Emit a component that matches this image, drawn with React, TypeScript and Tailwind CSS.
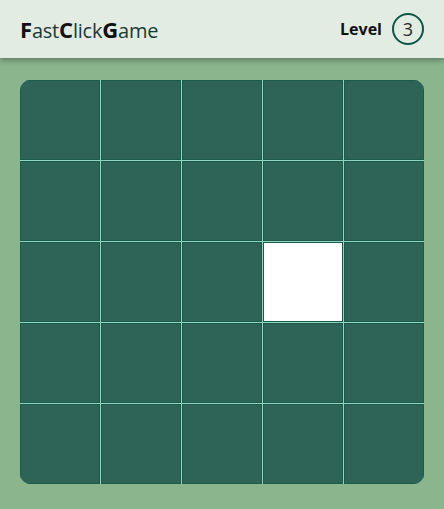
const ACTIVE = 13;

export default function App() {
  const cells = Array.from({ length: 25 }, (_, i) => i);

  return (
    <div
      className="min-h-[509px] bg-[#8ab58d]"
      style={{ fontFamily: '"Open Sans", "Noto Sans", sans-serif' }}
    >
      <header className="h-[58px] bg-[#e3ece3] shadow-[0_2px_6px_rgba(0,0,0,0.35)] flex items-center justify-between pl-5 pr-5">
        <h1 className="text-[20px] text-[#173a35] tracking-[-0.2px]">
          <span className="font-bold text-[22px] text-[#111]">F</span>ast
          <span className="font-bold text-[22px] text-[#111]">C</span>lick
          <span className="font-bold text-[22px] text-[#111]">G</span>ame
        </h1>
        <div className="flex items-center gap-[10px]">
          <span className="text-[16px] font-bold text-[#111]">Level</span>
          <div className="w-[32px] h-[32px] rounded-full border-2 border-[#0f5546] flex items-center justify-center text-[18px] text-[#1a2a2a]">
            3
          </div>
        </div>
      </header>

      <main className="px-5 pt-[22px]">
        <div className="w-[404px] grid grid-cols-5 gap-px bg-[#8ed6bf] rounded-[10px] overflow-hidden">
          {cells.map((i) => (
            <div
              key={i}
              className={`h-[80px] border border-[#1c5a4b] ${
                i === ACTIVE ? 'bg-white' : 'bg-[#2e6357]'
              }`}
            />
          ))}
        </div>
      </main>
    </div>
  );
}
